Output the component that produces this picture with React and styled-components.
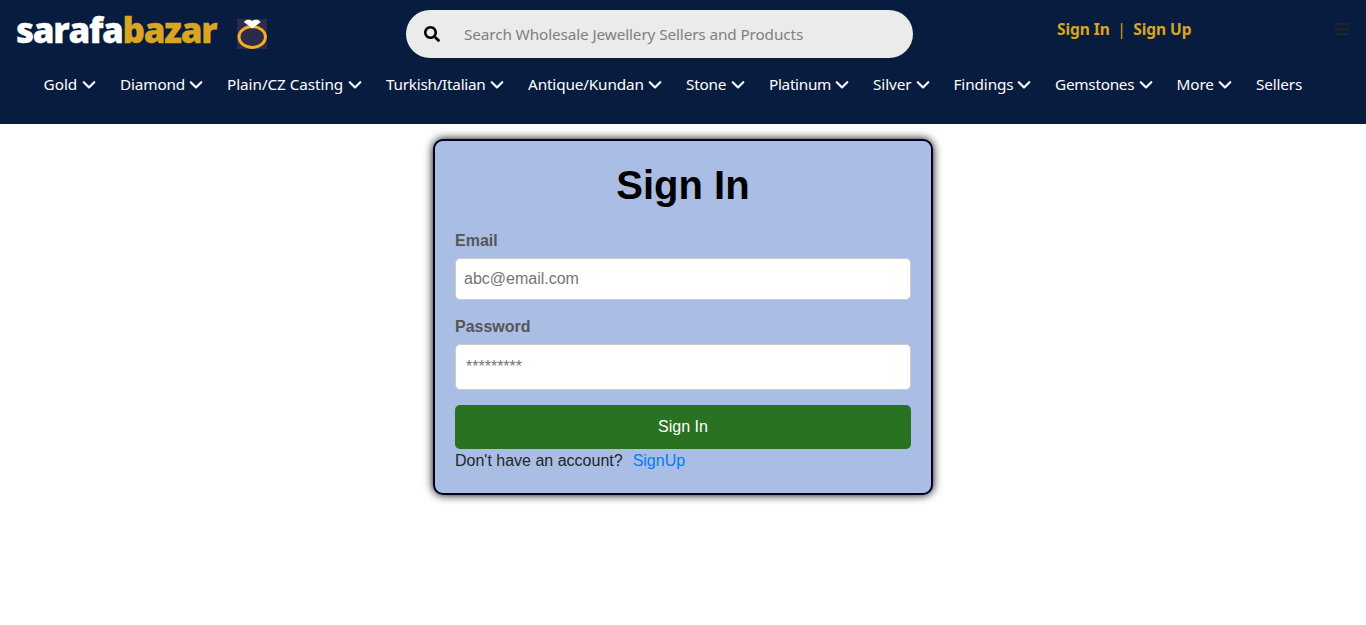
import React from "react";
import styled, { createGlobalStyle } from "styled-components";
import { FaChevronDown } from "react-icons/fa6";
import { FaBars, FaSearch } from "react-icons/fa";

const GlobalStyle = createGlobalStyle`
  *, *::before, *::after { box-sizing: border-box; }
  body {
    margin: 0;
    background: #fff;
    color: #212529;
    font-family: "Segoe UI", "Noto Sans", "Open Sans", sans-serif;
    font-size: 16px;
    line-height: 1.5;
  }
`;

const Page = styled.div`
  min-height: 100vh;
`;

const Header = styled.header`
  height: 124px;
  background: #071c3e;
`;

const TopBar = styled.div`
  display: flex;
  align-items: flex-start;
  height: 67px;
  padding: 10px 16px 0;
`;

const Brand = styled.a`
  display: flex;
  width: 390px;
  color: #fff;
  text-decoration: none;
`;

const BrandName = styled.span`
  width: 221px;
  font-family: "Open Sans", sans-serif;
  font-size: 35px;
  font-weight: 800;
  line-height: 40px;
  letter-spacing: -1.3px;
  -webkit-text-stroke: 0.3px currentColor;
  white-space: nowrap;
`;

const BrandAccent = styled.span`
  color: #daa520;
`;

const RingLogo = styled.svg`
  width: 30px;
  height: 30px;
  margin-top: 9px;
`;

const SearchBox = styled.label`
  display: flex;
  align-items: center;
  width: 507px;
  height: 48px;
  padding: 0 18px;
  border-radius: 24px;
  background: #ebebeb;
  color: #000;
`;

const SearchInput = styled.input`
  flex: 1;
  margin-left: 24px;
  padding: 0;
  border: 0;
  outline: 0;
  background: transparent;
  font: 15.3px "Noto Sans", sans-serif;
  letter-spacing: -0.11px;
  &::placeholder { color: #808080; opacity: 1; }
`;

const Account = styled.div`
  display: flex;
  gap: 7.5px;
  margin-left: 144px;
  padding-top: 7px;
  color: #daa520;
  font-size: 15.5px;
  line-height: 24px;
`;

const AccountLink = styled.a`
  color: inherit;
  font-weight: 700;
  letter-spacing: -0.06px;
  white-space: nowrap;
`;

const MenuButton = styled.button`
  display: flex;
  margin: 11px 0 0 auto;
  padding: 0;
  border: 0;
  background: none;
  color: #212529;
`;

const Nav = styled.nav`
  display: flex;
  padding: 5px 0 0 43.5px;
`;

const NavItem = styled.a`
  display: flex;
  align-items: center;
  justify-content: space-between;
  width: ${(p) => p.$width}px;
  height: 24px;
  margin-right: 24px;
  color: #fff;
  font-size: 15.3px;
  letter-spacing: ${(p) => p.$spacing || 0}px;
  white-space: nowrap;
`;

const Chevron = styled(FaChevronDown)`
  flex: none;
  width: 14px;
  height: 14px;
  stroke: currentColor;
  stroke-width: 20px;
`;

const Main = styled.main`
  display: flex;
  justify-content: center;
  padding-top: 15px;
  font-family: "Liberation Sans", Arial, sans-serif;
`;

const Card = styled.form`
  width: 500px;
  height: 356px;
  padding: 20px;
  border: 2px solid #030024;
  border-radius: 10px;
  background: #aabee5;
  box-shadow: 0 0 10px #000;
`;

const Title = styled.h1`
  margin: 0 0 20px;
  color: #000;
  font-size: 40px;
  line-height: 48px;
  text-align: center;
`;

const Label = styled.label`
  display: block;
  margin-bottom: 5px;
  color: #555;
  font-weight: 700;
  line-height: 24px;
`;

const Field = styled.input`
  display: block;
  width: 100%;
  height: ${(p) => p.$height}px;
  margin-bottom: 15px;
  padding: 0 ${(p) => p.$inset}px 1px;
  border: 1px solid #ccc;
  border-radius: 5px;
  background: #fff;
  font: 16px "Liberation Sans", Arial, sans-serif;
  &::placeholder { color: #757575; opacity: 1; }
`;

const Submit = styled.button`
  display: block;
  width: 100%;
  height: 44px;
  padding: 0;
  border: 0;
  border-radius: 5px;
  background: #287221;
  color: #fff;
  font: 16px "Liberation Sans", Arial, sans-serif;
`;

const Prompt = styled.p`
  display: flex;
  gap: 10px;
  margin: 0;
  line-height: 24px;
`;

const SignUpLink = styled.a`
  color: #007bff;
`;

const categories = [
  { name: "Gold", width: 52.5 },
  { name: "Diamond", width: 83, spacing: -0.15 },
  { name: "Plain/CZ Casting", width: 135, spacing: -0.06 },
  { name: "Turkish/Italian", width: 118, spacing: -0.25 },
  { name: "Antique/Kundan", width: 134, spacing: -0.14 },
  { name: "Stone", width: 59, spacing: -0.2 },
  { name: "Platinum", width: 80, spacing: -0.3 },
  { name: "Silver", width: 56.5, spacing: -0.1 },
  { name: "Findings", width: 77.5, spacing: -0.1 },
  { name: "Gemstones", width: 97.5, spacing: -0.25 },
  { name: "More", width: 55.5, spacing: -0.1 },
  { name: "Sellers", width: 47, spacing: -0.15, plain: true },
];

export default function App() {
  return (
    <Page>
      <GlobalStyle />
      <Header>
        <TopBar>
          <Brand>
            <BrandName>
              sarafa<BrandAccent>bazar</BrandAccent>
            </BrandName>
            <RingLogo viewBox="0 0 30 30">
              <rect width="30" height="30" fill="#2a2b4d" />
              <ellipse cx="15.2" cy="18" rx="13.2" ry="10.4" fill="none" stroke="#f7ae1d" strokeWidth="3" />
              <path d="M6.8 3 L9.8 .8 H13 L15.2 2 L17.4 .8 H20.8 L23.8 3 L15.4 9.6 Z" fill="#fff" />
            </RingLogo>
          </Brand>
          <SearchBox>
            <FaSearch size={16} />
            <SearchInput placeholder="Search Wholesale Jewellery Sellers and Products" />
          </SearchBox>
          <Account>
            <AccountLink>Sign In</AccountLink>
            <span>|</span>
            <AccountLink>Sign Up</AccountLink>
          </Account>
          <MenuButton type="button" aria-label="Menu">
            <FaBars size={16} />
          </MenuButton>
        </TopBar>
        <Nav>
          {categories.map((c) => (
            <NavItem key={c.name} $width={c.width} $spacing={c.spacing}>
              <span>{c.name}</span>
              {!c.plain && <Chevron />}
            </NavItem>
          ))}
        </Nav>
      </Header>
      <Main>
        <Card>
          <Title>Sign In</Title>
          <Label htmlFor="email">Email</Label>
          <Field id="email" type="email" placeholder="abc@email.com" $height={42} $inset={8} />
          <Label htmlFor="password">Password</Label>
          <Field id="password" type="password" placeholder="*********" $height={46} $inset={10} />
          <Submit type="button">Sign In</Submit>
          <Prompt>
            Don't have an account? <SignUpLink>SignUp</SignUpLink>
          </Prompt>
        </Card>
      </Main>
    </Page>
  );
}
